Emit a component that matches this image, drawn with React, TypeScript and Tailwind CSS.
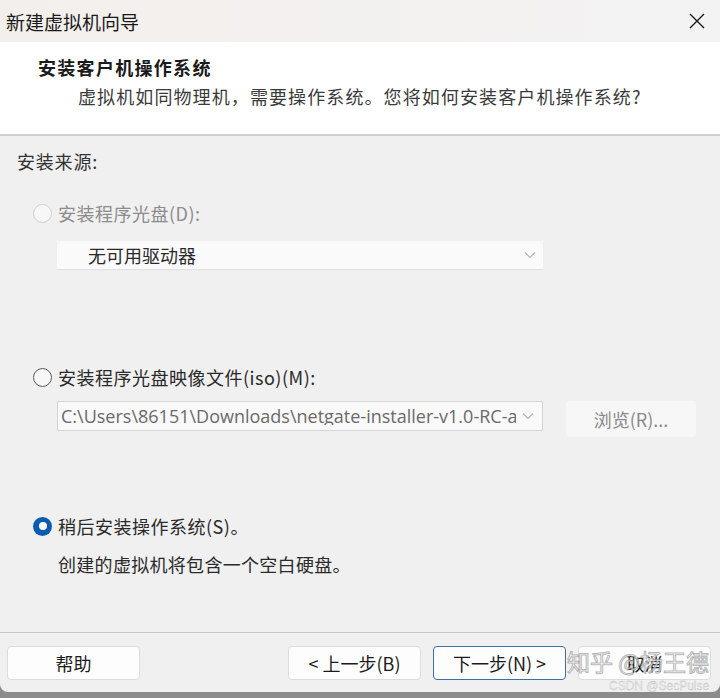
import React from "react";

const font = "font-['Microsoft_YaHei','Noto_Sans_CJK_SC','Noto_Sans',sans-serif]";

function Radio({ state }: { state: "disabled" | "off" | "on" }) {
  if (state === "on") {
    return (
      <span className="flex h-[19px] w-[19px] shrink-0 items-center justify-center rounded-full bg-[#0a5cb0]">
        <span className="h-[8px] w-[8px] rounded-full bg-white" />
      </span>
    );
  }
  return (
    <span
      className={
        "h-[19px] w-[19px] shrink-0 rounded-full border bg-[#f7f7f7] " +
        (state === "disabled" ? "border-[#cfcfcf]" : "border-[#5a5a5a]")
      }
    />
  );
}

function Chevron({ color }: { color: string }) {
  return (
    <svg width="12" height="8" viewBox="0 0 12 8" className="shrink-0">
      <path d="M1 1.5 L6 6.5 L11 1.5" fill="none" stroke={color} strokeWidth="1.1" />
    </svg>
  );
}

function Button({ children, primary }: { children: React.ReactNode; primary?: boolean }) {
  return (
    <div
      className={
        "flex h-[34px] w-[133px] items-center justify-center rounded-[4px] bg-[#fdfdfd] text-[18px] text-[#1b1b1b] " +
        (primary ? "border border-[#3d6fa6]" : "border border-[#dcdcdc]")
      }
    >
      {children}
    </div>
  );
}

export default function App() {
  return (
    <div className={"relative h-[698px] w-[720px] overflow-hidden bg-[#8c8c8c] " + font}>
      <div className="flex h-[692px] w-[720px] flex-col overflow-hidden rounded-b-[8px] bg-[#f0f0f0]">
        {/* title bar */}
        <div className="flex h-[42px] shrink-0 items-center justify-between bg-gradient-to-r from-[#f3efec] to-[#f3f3f3] pl-[6px] pr-[14px]">
          <span className="text-[19px] leading-none text-[#1a1a1a]">新建虚拟机向导</span>
          <svg width="18" height="18" viewBox="0 0 18 18">
            <path d="M2 2 L16 16 M16 2 L2 16" stroke="#1a1a1a" strokeWidth="1.4" />
          </svg>
        </div>
        {/* header */}
        <div className="flex h-[92px] shrink-0 flex-col bg-white pl-[38px] pt-[13px]">
          <div className="text-[18px] font-bold leading-[24px] tracking-[1.3px] text-[#1a1a1a]">安装客户机操作系统</div>
          <div className="mt-[5px] pl-[40px] text-[18px] leading-[24px] tracking-[1.1px] text-[#3a3a3a]">
            虚拟机如同物理机，需要操作系统。您将如何安装客户机操作系统?
          </div>
        </div>
        <div className="h-[2px] shrink-0 bg-[#cfcfcf]" />
        {/* body */}
        <div className="flex h-[496px] shrink-0 flex-col pl-[17px] pt-[13px]">
          <div className="text-[18px] leading-[24px] tracking-[0.8px] text-[#333]">安装来源:</div>

          <div className="mt-[28px] flex items-center gap-[6px] pl-[16px]">
            <Radio state="disabled" />
            <span className="text-[18px] leading-[24px] tracking-[0.5px] text-[#8c8c8c]">安装程序光盘(D):</span>
          </div>
          <div className="ml-[40px] mt-[16px] flex h-[28px] w-[486px] items-center justify-between bg-[#fafafa] pl-[31px] pr-[7px] shadow-[0_1px_1px_rgba(0,0,0,0.06)]">
            <span className="text-[18px] leading-none text-[#2a2a2a]">无可用驱动器</span>
            <Chevron color="#b5b5b5" />
          </div>

          <div className="mt-[96px] flex items-center gap-[6px] pl-[16px]">
            <Radio state="off" />
            <span className="text-[18px] leading-[24px] tracking-[0.5px] text-[#2a2a2a]">安装程序光盘映像文件(iso)(M):</span>
          </div>
          <div className="ml-[40px] mt-[12px] flex items-start gap-[23px]">
            <div className="flex h-[30px] w-[486px] items-center border border-[#d4d4d4] bg-[#f9f9f9] pl-[3px] pr-[8px]">
              <span className="flex-1 overflow-hidden whitespace-nowrap text-[18px] leading-none text-[#6a6a6a] [font-family:'Segoe_UI','Open_Sans','Noto_Sans',sans-serif]">
                C:\Users\86151\Downloads\netgate-installer-v1.0-RC-a
              </span>
              <span className="ml-[6px] flex h-full items-center bg-[#f9f9f9]">
                <Chevron color="#b0b0b0" />
              </span>
            </div>
            <div className="flex h-[36px] w-[130px] items-center justify-center rounded-[4px] bg-[#f7f7f7] text-[18px] text-[#8a8a8a]">
              浏览(R)...
            </div>
          </div>

          <div className="mt-[77px] flex items-center gap-[6px] pl-[16px]">
            <Radio state="on" />
            <span className="text-[18px] leading-[24px] tracking-[0.5px] text-[#2a2a2a]">稍后安装操作系统(S)。</span>
          </div>
          <div className="mt-[14px] pl-[41px] text-[18px] leading-[24px] tracking-[0.3px] text-[#2a2a2a]">
            创建的虚拟机将包含一个空白硬盘。
          </div>
        </div>
        <div className="h-px shrink-0 bg-[#c9c9c9]" />
        {/* footer */}
        <div className="flex flex-1 items-start pl-[7px] pt-[13px]">
          <Button>帮助</Button>
          <div className="ml-[148px] flex gap-[12px]">
            <Button>&lt; 上一步(B)</Button>
            <Button primary>下一步(N) &gt;</Button>
            <Button>取消</Button>
          </div>
        </div>
      </div>
      {/* watermarks */}
      <div className="pointer-events-none absolute left-[567px] top-[650px] whitespace-nowrap text-[23px] leading-none text-[rgba(255,255,255,0.75)] [-webkit-text-stroke:1px_rgba(120,120,120,0.55)]">
        知乎 @杨王德
      </div>
      <div className="pointer-events-none absolute left-[609px] top-[680px] whitespace-nowrap text-[12px] leading-none text-[rgba(235,235,235,0.85)] [font-family:'Liberation_Sans',sans-serif] [-webkit-text-stroke:0.3px_rgba(150,150,150,0.6)]">
        CSDN @SecPulse
      </div>
    </div>
  );
}
